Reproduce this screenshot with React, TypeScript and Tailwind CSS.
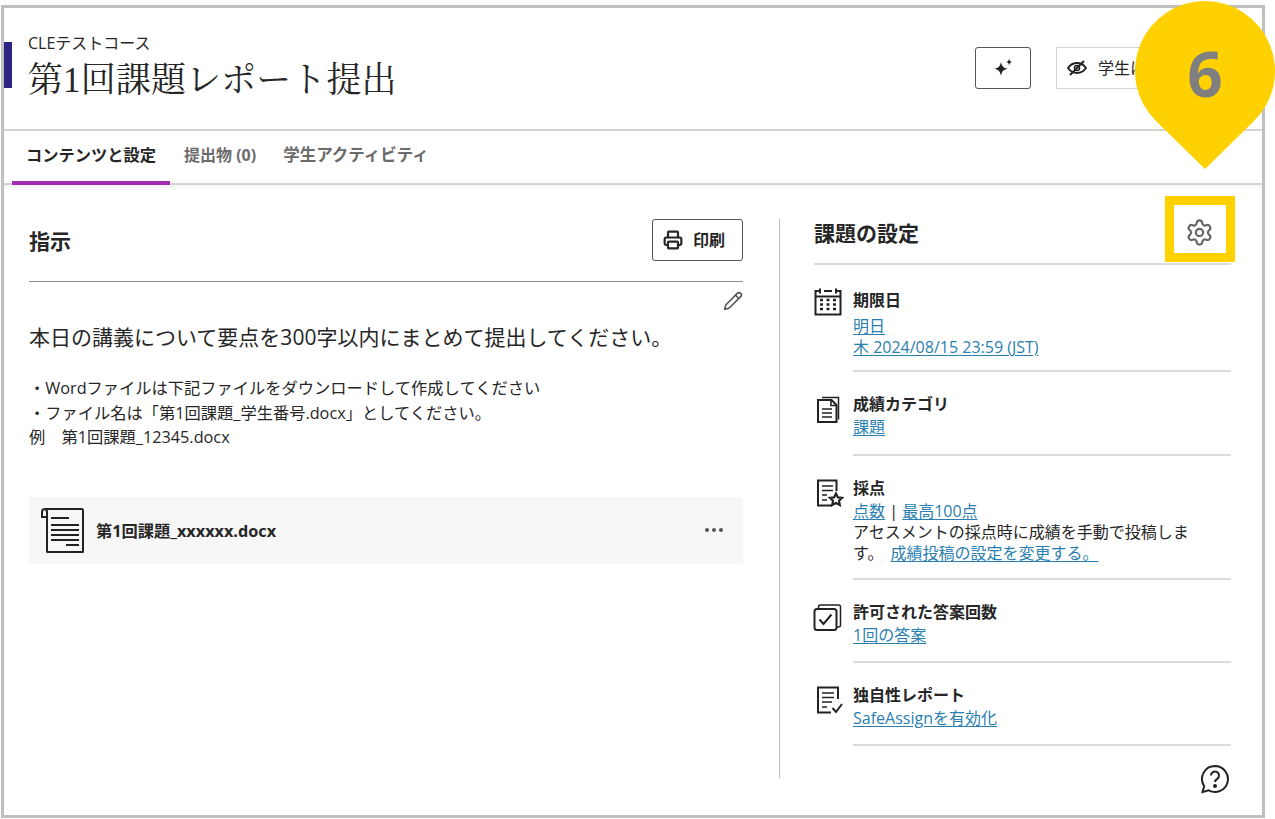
import { Pencil, Printer, Settings } from "lucide-react";
import type { ReactNode } from "react";

const sans = "font-['Open_Sans','Noto_Sans_CJK_JP',sans-serif]";
const link = "text-[#2a7fb0] underline underline-offset-2";

function Sparkle() {
  return (
    <svg viewBox="0 0 20 20" className="h-[25px] w-[25px] fill-[#222]">
      <path d="M8 4.500c.7 3.800 1.900 5 5.700 5.700-3.800.7-5 1.900-5.700 5.700-.7-3.800-1.900-5-5.700-5.700 3.800-.7 5-1.900 5.700-5.700z" />
      <path d="M14.500 2c.3 1.900.9 2.500 2.800 2.800-1.900.3-2.500.9-2.800 2.800-.3-1.900-.9-2.500-2.800-2.800 1.900-.3 2.500-.9 2.800-2.800z" />
    </svg>
  );
}

function HiddenEye() {
  return (
    <svg viewBox="0 0 20 20" className="h-5 w-5 fill-none stroke-[#222] stroke-2">
      <path d="M1 10c2.500-3.500 5.500-5 9-5s6.500 1.500 9 5c-2.500 3.500-5.500 5-9 5s-6.500-1.500-9-5z" />
      <circle cx="10" cy="10" r="2.500" strokeWidth="1.600" />
      <path d="M3 17L17 3" />
    </svg>
  );
}

function CalendarIcon() {
  return (
    <svg viewBox="0 0 30 30" className="-ml-px h-[30px] w-[30px] fill-none stroke-[#222] stroke-2">
      <path d="M7 4H2.500v23.500h25V4H23M11 4h8M7 1.500v5M23 1.500v5M2.500 9.500h25" />
      <path d="M7 13h3M13.500 13h3M20 13h3M7 17.500h3M13.500 17.500h3M20 17.500h3M7 22h3M13.500 22h3M20 22h3" strokeWidth="2.500" />
    </svg>
  );
}

function DocIcon() {
  return (
    <svg viewBox="0 0 30 30" className="h-[30px] w-[30px] fill-none stroke-[#222] stroke-2">
      <path d="M8 3.500h16.500v22" strokeWidth="1.500" />
      <path d="M4 6h13.500l5 5v17H4z" />
      <path d="M17 6v5.500h5.500M8 15h10M8 19h10M8 23h10" strokeWidth="1.600" />
    </svg>
  );
}

function GradeIcon() {
  return (
    <svg viewBox="0 0 30 30" className="h-[30px] w-[30px] fill-none stroke-[#222] stroke-2">
      <path d="M22.500 13V2.500H4v25h14" />
      <path d="M8 8h11M8 12.500h11M8 17h5M8 22h5" strokeWidth="1.700" />
      <path d="M22 15.500l1.900 3.900 4.100.5-3 2.900.8 4.200-3.800-2-3.800 2 .8-4.200-3-2.900 4.100-.5z" strokeWidth="2.200" />
    </svg>
  );
}

function AttemptIcon() {
  return (
    <svg viewBox="0 0 30 30" className="-ml-px h-[30px] w-[30px] fill-none stroke-[#222] stroke-2">
      <rect x="1.500" y="7" width="22" height="21" rx="2.500" />
      <path d="M5.500 7V5a2 2 0 0 1 2-2h18a2 2 0 0 1 2 2v18a2 2 0 0 1-2 2h-2" strokeWidth="1.500" />
      <path d="M6.500 17.500l4 4.500 8-9.500" />
    </svg>
  );
}

function OriginalityIcon() {
  return (
    <svg viewBox="0 0 30 30" className="h-[30px] w-[30px] fill-none stroke-[#222] stroke-2">
      <path d="M24 14V2.500H4v25h13" />
      <path d="M8 8h12M8 12.500h12M8 17h10M8 22h5" strokeWidth="1.700" />
      <path d="M18.500 23l3.500 4 6-8" />
    </svg>
  );
}

function FileIcon() {
  return (
    <svg viewBox="0 0 46 48" className="h-[48px] w-[46px] shrink-0 fill-none stroke-[#222] stroke-2">
      <path d="M5 3H41.500a1.500 1.500 0 0 1 1.500 1.500V45.500a.5.5 0 0 1-.5.5H7.500a.5.5 0 0 1-.5-.5V6A3 3 0 0 0 5 3a3 3 0 0 0-3 3v5h5" />
      <path d="M11 12h18M11 19h28M11 24h28M11 29h28M11 34h28M26 39h13" />
    </svg>
  );
}

function HelpIcon() {
  return (
    <svg viewBox="0 0 30 30" className="h-[30px] w-[30px] fill-none stroke-[#222] stroke-2">
      <path d="M15 2a13 13 0 1 1-6.300 24.400L2.500 28l1.700-5.800A13 13 0 0 1 15 2z" />
      <path d="M11 11.500a4 4 0 1 1 6.200 3.300c-1.400.9-2.200 1.700-2.200 3.200" />
      <circle cx="15" cy="22" r="1" className="fill-[#222]" />
    </svg>
  );
}

function SettingRow({
  icon,
  title,
  children,
  className,
}: {
  icon: ReactNode;
  title: string;
  children: ReactNode;
  className: string;
}) {
  return (
    <div className="flex">
      <div className="w-[39px] shrink-0 pt-[22px]">{icon}</div>
      <div className={`min-w-0 flex-1 border-b-2 border-[#dcdcdc] ${className}`}>
        <h3 className="text-[16px] leading-[25px] font-bold text-[#262626]">{title}</h3>
        <div className="text-[16px] leading-[21px] text-[#262626]">{children}</div>
      </div>
    </div>
  );
}

export default function App() {
  return (
    <div className={`relative h-[819px] w-[1275px] overflow-hidden bg-white ${sans}`}>
      <div className="mt-[5px] ml-px flex h-[813px] w-[1264px] flex-col border-[3px] border-[#bfbfbf] text-[#262626]">
        {/* header */}
        <header className="flex h-[123px] shrink-0 items-start border-b-2 border-[#d4d4d4]">
          <div className="mt-[34px] h-[46px] w-[8px] shrink-0 bg-[#2e2483]" />
          <div className="ml-[16px] flex-1 pt-[24px]">
            <div className="text-[16px] leading-[22px]">CLEテストコース</div>
            <h1 className="mt-[7px] font-['Liberation_Serif','Noto_Serif_CJK_JP',serif] text-[35px] leading-[40px] tracking-[0.1px] text-[#262626]">
              第1回課題レポート提出
            </h1>
          </div>
          <div className="mt-[39px] mr-[16px] flex items-center">
            <button className="flex h-[42px] w-[56px] items-center justify-center rounded-[3px] border border-[#555]">
              <Sparkle />
            </button>
            <button className="ml-[25px] flex h-[42px] w-[190px] items-center gap-[11px] border border-[#d4d4d4] pl-[10px] text-[16px]">
              <HiddenEye />
              学生に非表示
            </button>
          </div>
        </header>

        {/* tabs */}
        <nav className="flex h-[54px] shrink-0 items-stretch border-b-2 border-[#d4d4d4] pl-[8px] text-[16px] font-bold">
          <div className="mb-[-2px] flex w-[158px] items-center justify-center border-b-[4px] border-[#a52db5] pb-[1px] text-[16.250px] text-[#262626]">
            コンテンツと設定
          </div>
          <div className="ml-[14px] flex items-center pb-[5px] text-[#6b6b6b]">提出物 (0)</div>
          <div className="ml-[27px] flex items-center pb-[3px] text-[16.500px] text-[#6b6b6b]">学生アクティビティ</div>
        </nav>

        {/* content */}
        <main className="flex flex-1 bg-gradient-to-b from-[#f5f5f5] to-white to-[6px] pt-[34px] pl-[25px]">
          <section className="w-[714px] shrink-0">
            <div className="flex h-[63px] items-start justify-between border-b border-[#8a8a8a]">
              <h2 className="pt-[9px] text-[21px] leading-[26px] font-bold">指示</h2>
              <button className="flex h-[42px] w-[91px] items-center gap-[10px] rounded-[3px] border border-[#555] pl-[10px] text-[16px] font-bold">
                <Printer size={20} strokeWidth={2.6} />
                印刷
              </button>
            </div>
            <div className="flex h-[29px] items-end justify-end">
              <Pencil size={20} strokeWidth={1.9} className="text-[#555]" />
            </div>
            <p className="mt-[11px] text-[21px] leading-[30px]">本日の講義について要点を300字以内にまとめて提出してください。</p>
            <div className="mt-[24px] text-[16.250px] leading-[24.500px]">
              <p>・Wordファイルは下記ファイルをダウンロードして作成してください</p>
              <p>・ファイル名は「第1回課題_学生番号.docx」としてください。</p>
              <p>例　第1回課題_12345.docx</p>
            </div>
            <div className="mt-[47px] flex h-[67px] items-center bg-[#f7f7f7] pr-[20px] pl-[11px]">
              <FileIcon />
              <span className="ml-[10px] flex-1 pt-[2px] text-[16.250px] font-bold">第1回課題_xxxxxx.docx</span>
              <span className="flex gap-[3px]">
                <i className="h-[4px] w-[4px] rounded-full bg-[#555]" />
                <i className="h-[4px] w-[4px] rounded-full bg-[#555]" />
                <i className="h-[4px] w-[4px] rounded-full bg-[#555]" />
              </span>
            </div>
          </section>

          <div className="ml-[36px] h-[559px] w-px shrink-0 bg-[#bdbdbd]" />

          <aside className="ml-[34px] w-[417px] shrink-0">
            <div className="flex h-[46px] items-start justify-between border-b-2 border-[#dcdcdc]">
              <h2 className="pt-[1px] text-[21px] leading-[26px] font-bold">課題の設定</h2>
              <Settings size={29} strokeWidth={1.8} className="mr-[17px] -mt-[1px] text-[#666]" />
            </div>
            <SettingRow icon={<CalendarIcon />} title="期限日" className="h-[107px] pt-[23px]">
              <a className={`${link} mt-[3px] inline-block`}>明日</a>
              <br />
              <a className={link}>木 2024/08/15 23:59 (JST)</a>
            </SettingRow>
            <SettingRow icon={<DocIcon />} title="成績カテゴリ" className="h-[84px] pt-[20px]">
              <a className={link}>課題</a>
            </SettingRow>
            <SettingRow icon={<GradeIcon />} title="採点" className="h-[124px] pt-[20px]">
              <a className={link}>点数</a> | <a className={link}>最高100点</a>
              <br />
              アセスメントの採点時に成績を手動で投稿しま
              <br />
              す。 <a className={`${link} ml-[3px]`}>成績投稿の設定を変更する。</a>
            </SettingRow>
            <SettingRow icon={<AttemptIcon />} title="許可された答案回数" className="h-[83px] pt-[20px]">
              <a className={link}>1回の答案</a>
            </SettingRow>
            <SettingRow icon={<OriginalityIcon />} title="独自性レポート" className="h-[83px] pt-[20px]">
              <a className={link}>SafeAssignを有効化</a>
            </SettingRow>
            <div className="mt-[18px] flex justify-end pr-[1px]">
              <HelpIcon />
            </div>
          </aside>
        </main>
      </div>

      {/* callout overlay */}
      <div className="pointer-events-none absolute top-[196px] left-[1165px] h-[66px] w-[70px] border-[9px] border-[#ffd100]" />
      <svg viewBox="0 0 140 170" className="absolute top-0 left-[1135px] h-[170px] w-[140px] fill-[#ffd100]">
        <path d="M70 1a70 70 0 0 1 49 120L70 169 21 121A70 70 0 0 1 70 1z" />
      </svg>
      <div className="absolute top-[31px] left-[1135px] w-[140px] text-center font-['Open_Sans',sans-serif] text-[62px] leading-[84px] font-bold text-[#7f7f7f]">
        6
      </div>
    </div>
  );
}
